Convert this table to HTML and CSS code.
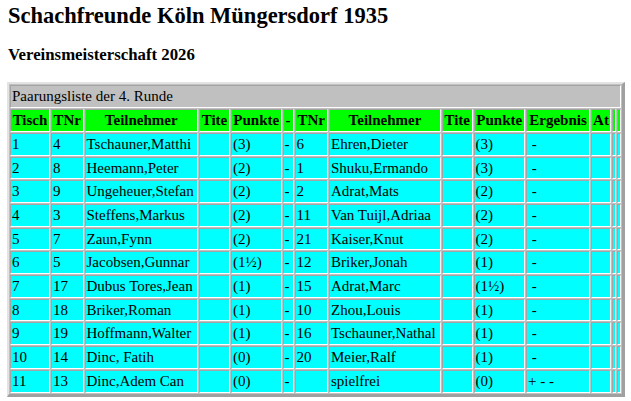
FILE: index.html
```html
<!DOCTYPE html>
<html lang="de">
<head>
<meta charset="utf-8">
<title>Schachfreunde Köln Müngersdorf 1935</title>
<link rel="stylesheet" href="styles.css">
</head>
<body>
<h1 class="title">Schachfreunde Köln Müngersdorf 1935</h1>
<h2 class="subtitle">Vereinsmeisterschaft 2026</h2>
<table class="pairings">
  <colgroup>
    <col class="c-tisch"><col class="c-tnr"><col class="c-name"><col class="c-tite"><col class="c-pkt"><col class="c-dash">
    <col class="c-tnr2"><col class="c-name2"><col class="c-tite2"><col class="c-pkt2"><col class="c-erg"><col class="c-at"><col class="c-x"><col class="c-x">
  </colgroup>
  <tr><td class="cap" colspan="14">Paarungsliste der 4. Runde</td></tr>
  <tr class="head">
    <th>Tisch</th><th>TNr</th><th>Teilnehmer</th><th>Tite</th><th>Punkte</th><th>-</th>
    <th>TNr</th><th>Teilnehmer</th><th>Tite</th><th>Punkte</th><th>Ergebnis</th><th>At</th><th></th><th></th>
  </tr>
  <tr><td>1</td><td>4</td><td>Tschauner,Matthi</td><td></td><td>(3)</td><td>-</td><td>6</td><td>Ehren,Dieter</td><td></td><td>(3)</td><td>&nbsp;-</td><td></td><td></td><td></td></tr>
  <tr><td>2</td><td>8</td><td>Heemann,Peter</td><td></td><td>(2)</td><td>-</td><td>1</td><td>Shuku,Ermando</td><td></td><td>(3)</td><td>&nbsp;-</td><td></td><td></td><td></td></tr>
  <tr><td>3</td><td>9</td><td>Ungeheuer,Stefan</td><td></td><td>(2)</td><td>-</td><td>2</td><td>Adrat,Mats</td><td></td><td>(2)</td><td>&nbsp;-</td><td></td><td></td><td></td></tr>
  <tr><td>4</td><td>3</td><td>Steffens,Markus</td><td></td><td>(2)</td><td>-</td><td>11</td><td>Van Tuijl,Adriaa</td><td></td><td>(2)</td><td>&nbsp;-</td><td></td><td></td><td></td></tr>
  <tr><td>5</td><td>7</td><td>Zaun,Fynn</td><td></td><td>(2)</td><td>-</td><td>21</td><td>Kaiser,Knut</td><td></td><td>(2)</td><td>&nbsp;-</td><td></td><td></td><td></td></tr>
  <tr><td>6</td><td>5</td><td>Jacobsen,Gunnar</td><td></td><td>(1½)</td><td>-</td><td>12</td><td>Briker,Jonah</td><td></td><td>(1)</td><td>&nbsp;-</td><td></td><td></td><td></td></tr>
  <tr><td>7</td><td>17</td><td>Dubus Tores,Jean</td><td></td><td>(1)</td><td>-</td><td>15</td><td>Adrat,Marc</td><td></td><td>(1½)</td><td>&nbsp;-</td><td></td><td></td><td></td></tr>
  <tr><td>8</td><td>18</td><td>Briker,Roman</td><td></td><td>(1)</td><td>-</td><td>10</td><td>Zhou,Louis</td><td></td><td>(1)</td><td>&nbsp;-</td><td></td><td></td><td></td></tr>
  <tr><td>9</td><td>19</td><td>Hoffmann,Walter</td><td></td><td>(1)</td><td>-</td><td>16</td><td>Tschauner,Nathal</td><td></td><td>(1)</td><td>&nbsp;-</td><td></td><td></td><td></td></tr>
  <tr><td>10</td><td>14</td><td>Dinc, Fatih</td><td></td><td>(0)</td><td>-</td><td>20</td><td>Meier,Ralf</td><td></td><td>(1)</td><td>&nbsp;-</td><td></td><td></td><td></td></tr>
  <tr><td>11</td><td>13</td><td>Dinc,Adem Can</td><td></td><td>(0)</td><td>-</td><td></td><td>spielfrei</td><td></td><td>(0)</td><td>+ - -</td><td></td><td></td><td></td></tr>
</table>
</body>
</html>
```

FILE: styles.css
```css
html, body {
  background: #ffffff;
}
body {
  margin: 0;
  padding: 0 7px;
  color: #000000;
  font-family: "Liberation Serif", "Times New Roman", serif;
}
.title {
  margin: 2.5px 0 0 1px;
  font-size: 22.5px;
  font-weight: bold;
  line-height: normal;
}
.subtitle {
  margin: 16.85px 0 0 1px;
  font-size: 16.8px;
  font-weight: bold;
  line-height: normal;
}
.pairings {
  margin-top: 17.1px;
  box-sizing: border-box;
  width: 618px;
  table-layout: fixed;
  border-collapse: separate;
  border-spacing: 1px;
  border-style: solid;
  border-width: 2px 3px 3px 2px;
  border-color: #e3e3e3 #a0a0a0 #a0a0a0 #e3e3e3;
  background: #c0c0c0;
  font-size: 15px;
}
.c-tisch { width: 40px; }
.c-tnr { width: 32.5px; }
.c-name { width: 113.5px; }
.c-tite { width: 31px; }
.c-pkt { width: 50.5px; }
.c-dash { width: 11px; }
.c-tnr2 { width: 33.5px; }
.c-name2 { width: 112px; }
.c-tite2 { width: 30.5px; }
.c-pkt2 { width: 51.5px; }
.c-erg { width: 64px; }
.c-at { width: 20px; }
.c-x { width: 4px; }
.pairings td,
.pairings th {
  box-sizing: border-box;
  padding: 0 1px;
  line-height: 20.7px;
  white-space: nowrap;
  overflow: hidden;
  border: 1px solid;
  border-color: #a4a4a4 #ffffff #ffffff #a4a4a4;
  background: #00ffff;
  text-align: left;
  vertical-align: middle;
}
.pairings .cap {
  background: #c0c0c0;
}
.pairings .head th {
  background: #00ff00;
  font-weight: bold;
  text-align: center;
}
```
